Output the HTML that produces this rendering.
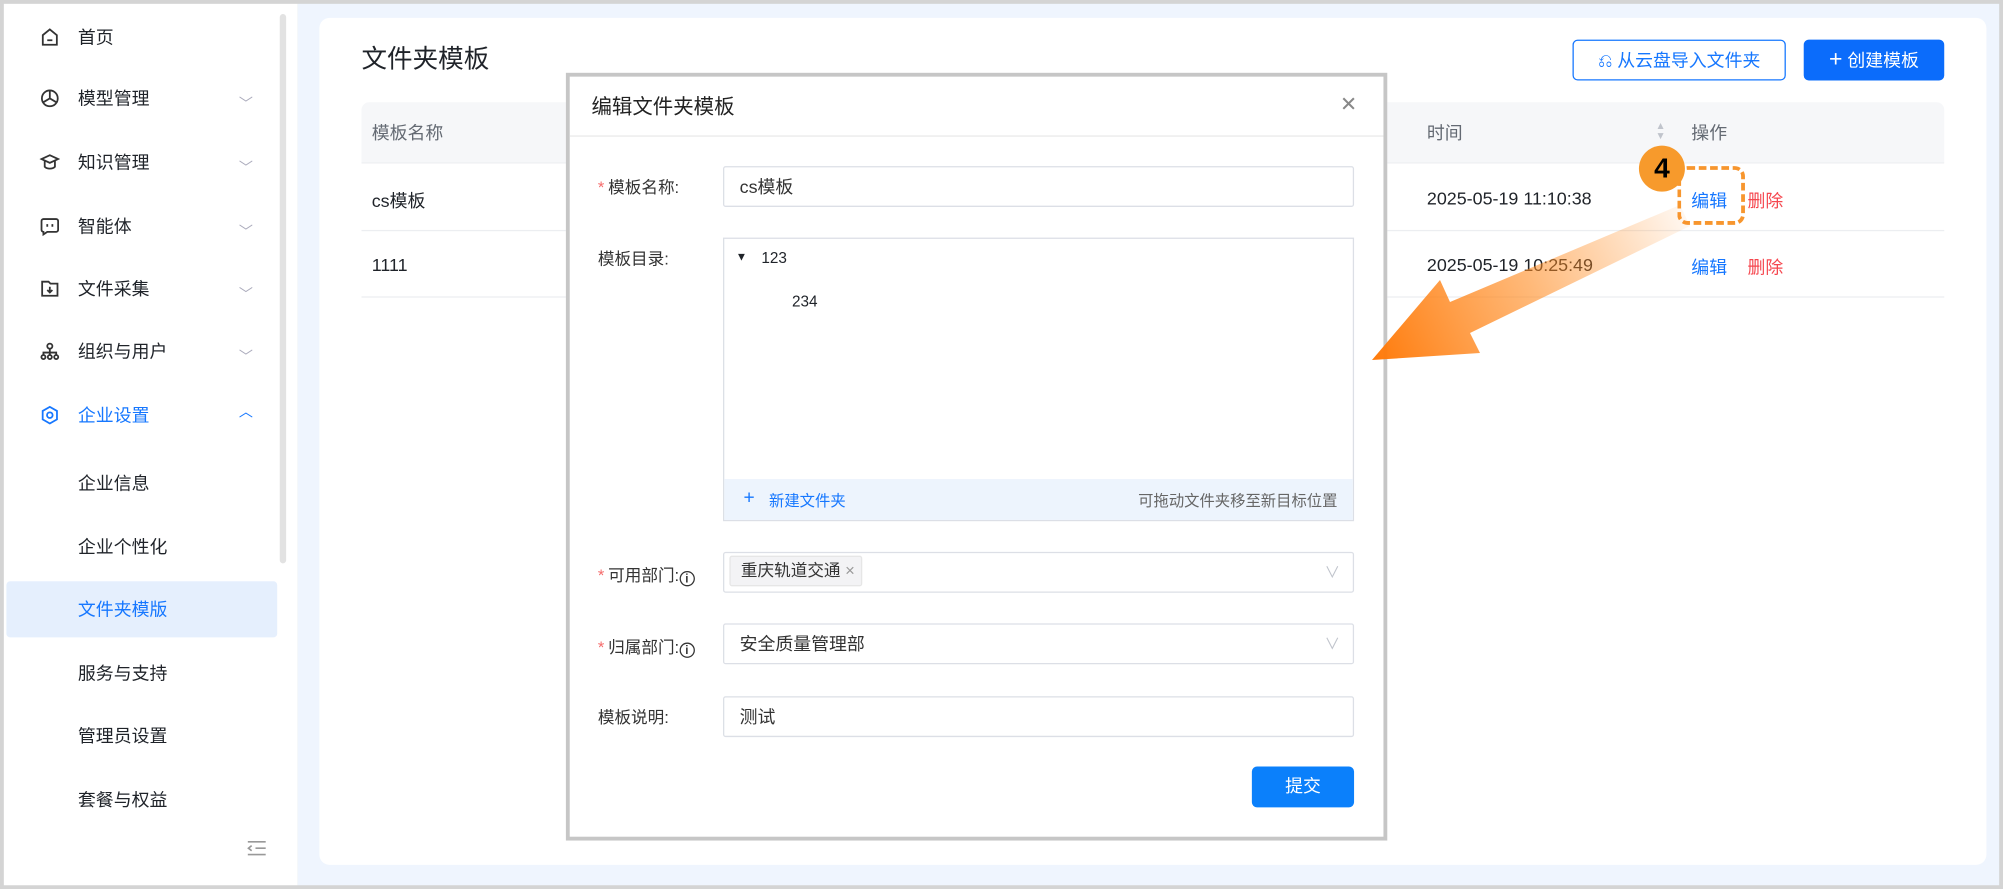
<!DOCTYPE html>
<html><head><meta charset="utf-8"><style>
*{box-sizing:border-box;margin:0;padding:0}
html,body{width:2003px;height:889px;overflow:hidden;background:#d4d4d4}
body{font-family:"Liberation Sans","Noto Sans CJK SC",sans-serif;color:#1f2329;position:relative}
#w{position:absolute;left:0;top:0;width:1568px;height:696px;transform:scale(1.27742);transform-origin:0 0;background:#d4d4d4}
.a{position:absolute}
#side{left:3px;top:3px;width:230px;height:690px;background:#fff}
#main{left:233px;top:3px;width:1332px;height:690px;background:#eff5fe}
.mi{position:absolute;left:0;width:230px;font-size:14px;line-height:20px;color:#1f2329}
.mi .ic{position:absolute;left:28px;top:2px;width:16px;height:16px}
.mi .t{position:absolute;left:58px}
.mi .ch{position:absolute;left:184px;top:5px;color:#aab;font-size:11px}
.sub{position:absolute;left:58px;font-size:14px;line-height:20px}
#card{left:250px;top:14px;width:1305px;height:663px;background:#fff;border-radius:8px}
.btn{position:absolute;height:32px;border-radius:4px;font-size:14px;line-height:30px;text-align:center}
.th{font-size:14px;color:#646a73}
.td{font-size:14px;color:#1f2329}
#modal{left:443px;top:57px;width:643px;height:601px;background:#fff;border:3px solid #c6c6c6}
.lbl{position:absolute;font-size:13px;color:#333;line-height:16px}
.req{color:#f56c6c;margin-right:3px}
.inp{position:absolute;left:120px;width:494px;height:32px;border:1px solid #dcdfe6;border-radius:2px;font-size:14px;line-height:30px;padding-left:12px;color:#333}
.info{display:inline-block;width:12px;height:12px;border:1px solid #333;border-radius:50%;font-size:9px;line-height:10px;text-align:center;vertical-align:-1px;font-weight:bold}
.dd{position:absolute;right:10px;top:0;color:#c0c4cc;font-size:12px}
</style></head><body>
<div id="w">
<div class="a" id="side">
  <div class="mi" style="top:16px"><svg class="ic" viewBox="0 0 16 16" fill="none" stroke="#333" stroke-width="1.4"><path d="M2.5 6.5L8 2l5.5 4.5V14h-11z"/><path d="M6 10.5h4"/></svg><span class="t">首页</span></div>
  <div class="mi" style="top:64px"><svg class="ic" viewBox="0 0 16 16" fill="none" stroke="#333" stroke-width="1.4"><circle cx="8" cy="8" r="6.2"/><path d="M8 2v6l-5 3M8 8l5 3"/></svg><span class="t">模型管理</span><span class="ch">﹀</span></div>
  <div class="mi" style="top:114px"><svg class="ic" viewBox="0 0 16 16" fill="none" stroke="#333" stroke-width="1.4"><path d="M1.5 5.5L8 2.5l6.5 3L8 8.5z"/><path d="M4 7v4.5c2 2 6 2 8 0V7"/></svg><span class="t">知识管理</span><span class="ch">﹀</span></div>
  <div class="mi" style="top:164px"><svg class="ic" viewBox="0 0 16 16" fill="none" stroke="#333" stroke-width="1.4"><path d="M3 2.5h10a1.5 1.5 0 011.5 1.5v7A1.5 1.5 0 0113 12.5H6l-3 2v-2A1.5 1.5 0 011.5 11V4A1.5 1.5 0 013 2.5z"/><path d="M6 6.5v2M10 6.5v2"/></svg><span class="t">智能体</span><span class="ch">﹀</span></div>
  <div class="mi" style="top:213px"><svg class="ic" viewBox="0 0 16 16" fill="none" stroke="#333" stroke-width="1.4"><path d="M2 2.5h5l1.5 1.5H14v9.5H2z"/><path d="M8 6.5v4.5M6 9l2 2 2-2"/></svg><span class="t">文件采集</span><span class="ch">﹀</span></div>
  <div class="mi" style="top:262px"><svg class="ic" viewBox="0 0 16 16" fill="none" stroke="#333" stroke-width="1.4"><circle cx="8" cy="4" r="2"/><circle cx="3" cy="12.5" r="1.6"/><circle cx="8" cy="12.5" r="1.6"/><circle cx="13" cy="12.5" r="1.6"/><path d="M8 6v4.8M3 11V9h10v2"/></svg><span class="t">组织与用户</span><span class="ch">﹀</span></div>
  <div class="mi" style="top:312px;color:#1677ff"><svg class="ic" viewBox="0 0 16 16" fill="none" stroke="#1677ff" stroke-width="1.4"><path d="M8 1.5l5.6 3.2v6.6L8 14.5l-5.6-3.2V4.7z"/><circle cx="8" cy="8" r="2.2"/></svg><span class="t">企业设置</span><span class="ch" style="color:#1677ff;top:-2px">︿</span></div>
  <div class="sub" style="top:365px">企业信息</div>
  <div class="sub" style="top:415px">企业个性化</div>
  <div class="a" style="left:2px;top:452px;width:212px;height:44px;background:#e5effd;border-radius:3px"></div>
  <div class="sub" style="top:464px;color:#1677ff">文件夹模版</div>
  <div class="sub" style="top:514px">服务与支持</div>
  <div class="sub" style="top:563px">管理员设置</div>
  <div class="sub" style="top:613px">套餐与权益</div>
  <div class="a" style="left:216px;top:8px;width:5px;height:430px;background:#e2e2e2;border-radius:3px"></div>
  <svg class="a" style="left:190px;top:654px" width="16" height="14" viewBox="0 0 16 14" fill="none" stroke="#999" stroke-width="1.3"><path d="M1 2h14M7 7h8M1 12h14M4 5L1.5 7 4 9"/></svg>
</div>
<div class="a" id="main"></div>
<div class="a" id="card">
  <div class="a" style="left:33px;top:20px;font-size:20px;line-height:26px;color:#1f2329">文件夹模板</div>
  <div class="btn" style="left:981px;top:17px;width:167px;border:1px solid #1677ff;color:#1677ff;background:#fff">⎌ 从云盘导入文件夹</div>
  <div class="btn" style="left:1162px;top:17px;width:110px;background:#0b6cfb;color:#fff"><span style="font-size:18px">+</span> 创建模板</div>
  <div class="a" style="left:33px;top:66px;width:1239px;height:48px;background:#f6f7f9;border-radius:6px 6px 0 0;border-bottom:1px solid #eceef1"></div>
  <div class="a th" style="left:41px;top:80px">模板名称</div>
  <div class="a th" style="left:867px;top:80px">时间</div>
  <div class="a" style="left:1046px;top:81px;color:#c0c4cc;font-size:8px;line-height:8px">▲<br>▼</div>
  <div class="a th" style="left:1074px;top:80px">操作</div>
  <div class="a" style="left:33px;top:166px;width:1239px;height:1px;background:#eceef1"></div>
  <div class="a" style="left:33px;top:218px;width:1239px;height:1px;background:#eceef1"></div>
  <div class="a td" style="left:41px;top:133px">cs模板</div>
  <div class="a td" style="left:41px;top:185px">1111</div>
  <div class="a td" style="left:867px;top:133px">2025-05-19 11:10:38</div>
  <div class="a td" style="left:867px;top:185px">2025-05-19 10:25:49</div>
  <div class="a td" style="left:1074px;top:133px;color:#1677ff">编辑</div>
  <div class="a td" style="left:1118px;top:133px;color:#f5474f">删除</div>
  <div class="a td" style="left:1074px;top:185px;color:#1677ff">编辑</div>
  <div class="a td" style="left:1118px;top:185px;color:#f5474f">删除</div>
</div>
<div class="a" id="modal">
  <div class="a" style="left:17px;top:10px;font-size:16px;color:#222">编辑文件夹模板</div>
  <div class="a" style="left:603px;top:12px;font-size:16px;color:#888">✕</div>
  <div class="a" style="left:0;top:46px;width:637px;height:1px;background:#e8e8e8"></div>
  <div class="lbl" style="left:22px;top:79px"><span class="req">*</span>模板名称:</div>
  <div class="inp" style="top:70px">cs模板</div>
  <div class="lbl" style="left:22px;top:135px">模板目录:</div>
  <div class="a" style="left:120px;top:126px;width:494px;height:222px;border:1px solid #dcdfe6">
    <div class="a" style="left:9px;top:9px;font-size:9px">▼</div>
    <div class="a" style="left:29px;top:8px;font-size:12px">123</div>
    <div class="a" style="left:53px;top:42px;font-size:12px">234</div>
    <div class="a" style="left:0;top:188px;width:492px;height:32px;background:#edf4fd">
      <div class="a" style="left:15px;top:6px;color:#1677ff;font-size:15px">+</div>
      <div class="a" style="left:35px;top:8px;color:#1677ff;font-size:12px">新建文件夹</div>
      <div class="a" style="right:12px;top:8px;color:#666;font-size:12px">可拖动文件夹移至新目标位置</div>
    </div>
  </div>
  <div class="lbl" style="left:22px;top:383px"><span class="req">*</span>可用部门:<span class="info">i</span></div>
  <div class="inp" style="top:372px;padding-left:4px"><span style="display:inline-block;background:#f3f3f5;border:1px solid #e6e6e6;border-radius:2px;height:24px;line-height:22px;padding:0 5px 0 8px;font-size:13px;vertical-align:2px">重庆轨道交通 <span style="color:#999">×</span></span><span class="dd">∨</span></div>
  <div class="lbl" style="left:22px;top:439px"><span class="req">*</span>归属部门:<span class="info">i</span></div>
  <div class="inp" style="top:428px">安全质量管理部<span class="dd">∨</span></div>
  <div class="lbl" style="left:22px;top:494px">模板说明:</div>
  <div class="inp" style="top:485px">测试</div>
  <div class="btn" style="left:534px;top:540px;width:80px;background:#0b80fb;color:#fff">提交</div>
</div>
<div class="a" style="left:1313px;top:130px;width:53px;height:46px;border:3px dashed #f7962e;border-radius:8px"></div>
<div class="a" style="left:1283px;top:114px;width:36px;height:36px;border-radius:50%;background:#f79a2c;color:#000;font-weight:bold;font-size:22px;line-height:36px;text-align:center">4</div>
</div>
<svg class="a" style="position:absolute;left:0;top:0" width="2003" height="889">
<defs><linearGradient id="g" x1="1690" y1="215" x2="1372" y2="360" gradientUnits="userSpaceOnUse"><stop offset="0" stop-color="#ff8a1f" stop-opacity="0.05"/><stop offset="0.5" stop-color="#ff8a1f" stop-opacity="0.6"/><stop offset="1" stop-color="#ff7a0a" stop-opacity="1"/></linearGradient></defs>
<polygon points="1372,360 1440,280 1450,302 1680,205 1690,226 1470,333 1480,353" fill="url(#g)"/>
</svg>
</body></html>
